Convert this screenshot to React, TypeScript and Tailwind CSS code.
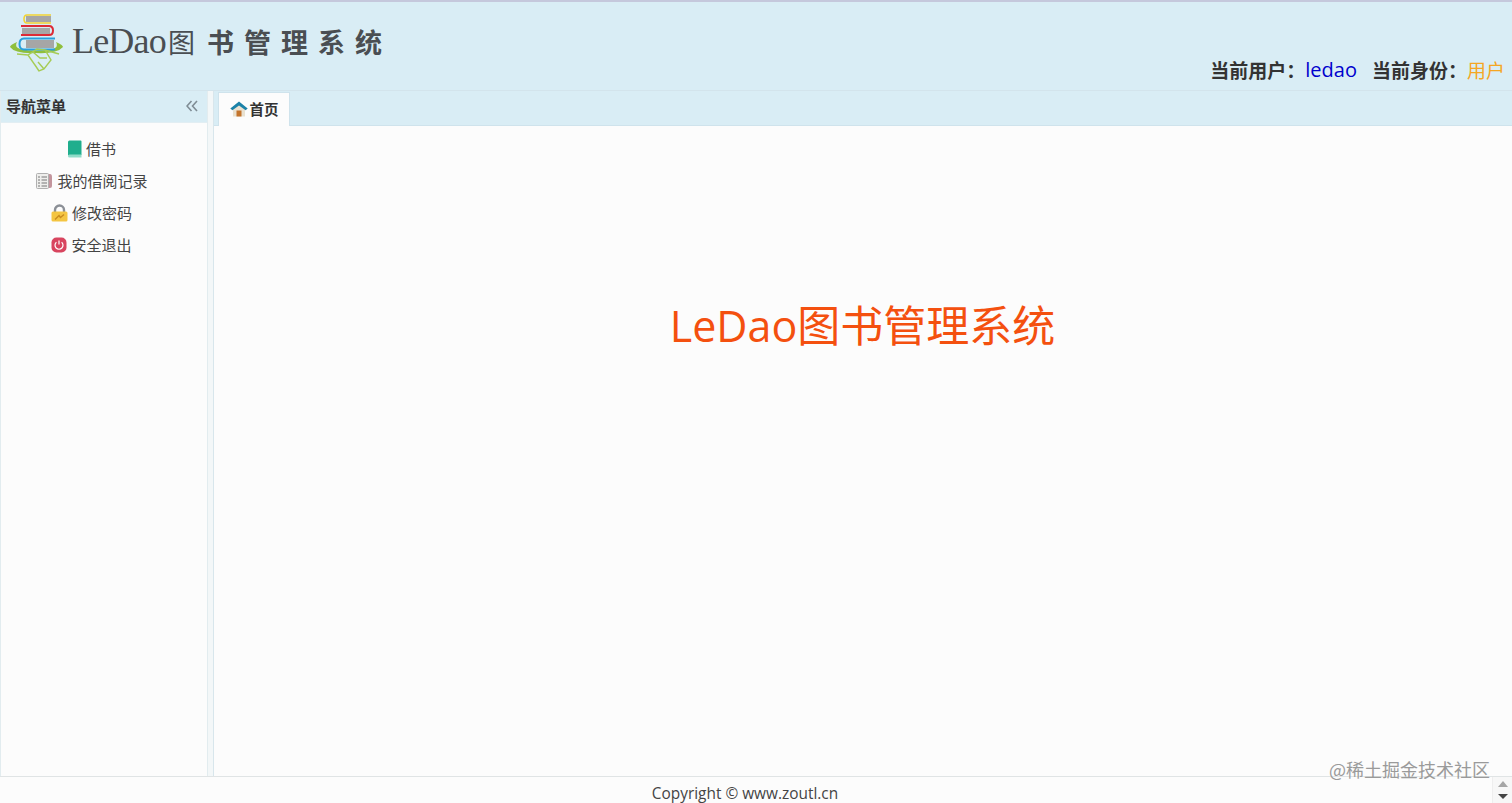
import React from 'react';

const cjk = '"Noto Sans CJK SC", "Open Sans", sans-serif';

const BookIcon = () => (
  <svg width="15" height="18" viewBox="0 0 15 18">
    <path d="M1 2 Q1 0.5 2.5 0.5 H13.5 Q14.5 0.5 14.5 1.5 V15 H2.5 Q1 15 1 16 Z" fill="#1fae8d" />
    <path d="M1 16 Q1 14.5 2.5 14.5 H14.5 V17.5 H2.5 Q1 17.5 1 16 Z" fill="#8fdcc8" />
  </svg>
);

const RecordIcon = () => (
  <svg width="18" height="18" viewBox="0 0 18 18">
    <path d="M12 2 H15 Q17 2 17 5 V14 Q17 16 15 16 H12 Z" fill="#c3959d" />
    <rect x="1.5" y="1.5" width="12" height="15" rx="1" fill="#eeeeec" stroke="#b0b0b0" />
    <path d="M3 5 H5 M6.5 5 H12 M3 8 H5 M6.5 8 H12 M3 11 H5 M6.5 11 H12 M3 14 H5 M6.5 14 H12" stroke="#777" strokeWidth="1.2" />
  </svg>
);

const LockIcon = () => (
  <svg width="17" height="18" viewBox="0 0 17 18">
    <path d="M4 9 V6 A4.5 4.5 0 0 1 13 6 V9" fill="none" stroke="#8b8f96" strokeWidth="2.4" />
    <rect x="0.5" y="7.5" width="16" height="10" rx="1.5" fill="#f4c542" />
    <path d="M4 15.5 L8 11.5 L9.5 13.5 L13 10.5" fill="none" stroke="#c98a1e" strokeWidth="1.4" />
  </svg>
);

const PowerIcon = () => (
  <svg width="16" height="16" viewBox="0 0 16 16">
    <rect x="0.5" y="0.5" width="15" height="15" rx="5" fill="#d8455f" />
    <path d="M5.4 5.2 A4 4 0 1 0 10.6 5.2" fill="none" stroke="#fff" strokeWidth="1.2" />
    <path d="M8 3.6 V7.6" stroke="#fff" strokeWidth="1.2" />
  </svg>
);

const HomeIcon = () => (
  <svg width="18" height="16" viewBox="0 0 18 16">
    <path d="M3 7 L9 3 L15 7 V15.5 H3 Z" fill="#e9e1d0" />
    <rect x="6.5" y="9.5" width="5" height="6" fill="#c4742c" />
    <path d="M0.3 7.6 L9 0.4 L17.7 7.6 L15.6 9.2 L9 4.4 L2.4 9.2 Z" fill="#1b82a8" />
  </svg>
);

const Logo = () => (
  <svg width="58" height="62" viewBox="0 0 58 62">
    <path d="M8 29 Q1 32 1 34 Q6 41 27 40 Q48 41 54 34 Q54 32 47 29 Q50 34 44 36 Q27 39 11 36 Q5 34 8 29 Z" fill="#8fbf3c" />
    <rect x="17" y="3" width="25" height="6" fill="#a6a6a6" />
    <path d="M42 2 H18 Q15 2 15 6 Q15 10 18 10 H42" stroke="#f2d230" strokeWidth="1.6" fill="none" />
    <rect x="13" y="15" width="28" height="6" fill="#a6a6a6" />
    <path d="M12 13 H40 Q44 13 44 17.5 Q44 22 40 22 H12" stroke="#dd2b36" strokeWidth="2" fill="none" />
    <rect x="17" y="27" width="28" height="8" fill="#a6a6a6" />
    <path d="M46 25.5 H15 Q10.5 25.5 10.5 31 Q10.5 36.5 15 36.5 H46" stroke="#2a9fdc" strokeWidth="2" fill="none" />
    <path d="M8 41 L19 42 L28 36 L36 37 L50 41 M19 42 L30 58 L35 56 L42 47 L36 37 M24 39 L31 45 L38 45 M30 58 L26 52 M35 56 L29 49" stroke="#a6cc55" strokeWidth="1.4" fill="none" />
  </svg>
);

const menu = [
  { icon: <BookIcon />, label: '借书' },
  { icon: <RecordIcon />, label: '我的借阅记录' },
  { icon: <LockIcon />, label: '修改密码' },
  { icon: <PowerIcon />, label: '安全退出' },
];

export default function App() {
  return (
    <div className="relative flex h-[803px] w-[1512px] flex-col overflow-hidden bg-[#fcfcfc] text-[#333]" style={{ fontFamily: cjk }}>
      {/* header */}
      <header className="flex h-[91px] shrink-0 items-start justify-between border-t-2 border-b border-[#c5c8dc] border-b-[#d3e4ec] bg-[#d9edf5] pl-[9px]">
        <div className="flex items-start pt-[11px]">
          <Logo />
          <div className="ml-[5px] mt-[6px] flex items-baseline text-[#4a4e52]">
            <span className="text-[36px] leading-[44px] tracking-[-0.8px]" style={{ fontFamily: '"Liberation Serif", serif' }}>LeDao</span>
            <span className="ml-[2px] text-[27px] leading-[44px]">图</span>
            <span className="ml-[12px] text-[27px] font-bold leading-[44px] tracking-[10px]">书管理系统</span>
          </div>
        </div>
        <div className="flex pr-[7px] pt-[54px] text-[19px] leading-[28px]">
          <span className="font-bold text-[#333]">当前用户：</span>
          <span className="text-[#0000cd]" style={{ fontFamily: '"Open Sans", sans-serif', fontSize: 20 }}>ledao</span>
          <span className="ml-[15px] font-bold text-[#333]">当前身份：</span>
          <span className="text-[#f5a623]">用户</span>
        </div>
      </header>

      <div className="flex min-h-0 flex-1">
        {/* sidebar */}
        <aside className="flex w-[208px] shrink-0 flex-col border-r border-l border-[#e2ecef]">
          <div className="flex h-[32px] shrink-0 items-center justify-between border-b border-[#e2eef3] bg-[#d9edf5] pb-[1px] pl-[5px] pr-[9px]">
            <span className="text-[15px] font-bold text-[#333]">导航菜单</span>
            <svg width="12" height="12" viewBox="0 0 12 12" fill="none" stroke="#7f8c94" strokeWidth="1.6">
              <path d="M5.5 1 L1 6 L5.5 11 M11 1 L6.5 6 L11 11" />
            </svg>
          </div>
          <nav className="flex flex-col items-center pr-[25px] pt-[10px]">
            {menu.map((m) => (
              <div key={m.label} className="flex h-[32px] items-center gap-[4px] text-[15px] text-[#444]">
                {m.icon}
                <span>{m.label}</span>
              </div>
            ))}
          </nav>
        </aside>

        <div className="w-[5px] shrink-0 bg-[#f3f7f8]" />

        {/* main */}
        <main className="flex min-w-0 flex-1 flex-col border-l border-[#d8e6ec]">
          <div className="flex h-[35px] shrink-0 items-end border-b border-[#cfe3ec] bg-[#d9edf5] pl-[4px]">
            <div className="-mb-px flex h-[34px] w-[72px] items-center justify-center gap-[2px] border border-b-0 border-[#cfe3ec] bg-[#fcfcfc] pb-[1px] text-[14.5px] font-bold text-[#333]">
              <HomeIcon />
              <span>首页</span>
            </div>
          </div>
          <div className="flex flex-1 justify-center pt-[171px] pr-[1px]">
            <h1 className="text-[43px] font-normal leading-[58px] text-[#f4500f]" style={{ fontFamily: '"Open Sans", "Noto Sans CJK SC", sans-serif' }}>LeDao图书管理系统</h1>
          </div>
        </main>
      </div>

      {/* footer */}
      <footer className="flex h-[27px] shrink-0 items-center justify-center border-t border-[#e0e4e5] bg-[#fcfcfc] pr-[22px] pt-[7px] text-[15.4px] text-[#444]">
        <span style={{ fontFamily: '"Open Sans", "Noto Sans CJK SC", sans-serif' }}>Copyright © www.zoutl.cn</span>
      </footer>

      {/* scroll arrows, over the footer */}
      <div className="absolute bottom-0 right-0 flex h-[26px] w-[20px] flex-col items-center justify-around border-l border-[#eeeeee] bg-[#f7f7f7]">
        <div className="h-0 w-0 border-x-[5px] border-b-[6px] border-x-transparent border-b-[#a5a5a5]" />
        <div className="h-0 w-0 border-x-[5px] border-t-[5px] border-x-transparent border-t-[#444]" />
      </div>

      {/* watermark */}
      <span className="absolute bottom-[22px] right-[22px] text-[18px] leading-[24px] text-[#9a9a9a]">@稀土掘金技术社区</span>
    </div>
  );
}
